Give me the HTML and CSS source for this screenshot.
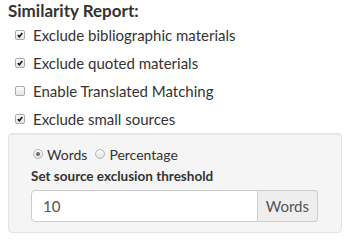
FILE: index.html
```html
<!DOCTYPE html>
<html lang="en">
<head>
    <meta charset="UTF-8">
    <title>Similarity Report</title>
    <link rel="stylesheet" href="styles.css">
</head>
<body>
    <div class="report">
        <div class="report-title">Similarity Report:</div>

        <label class="check-row">
            <span class="box checked"><svg viewBox="0 0 10 10"><path d="M2.2 5.2 L4.2 7.2 L7.9 2.6" /></svg></span>
            Exclude bibliographic materials
        </label>
        <label class="check-row">
            <span class="box checked"><svg viewBox="0 0 10 10"><path d="M2.2 5.2 L4.2 7.2 L7.9 2.6" /></svg></span>
            Exclude quoted materials
        </label>
        <label class="check-row">
            <span class="box"></span>
            Enable Translated Matching
        </label>
        <label class="check-row">
            <span class="box checked"><svg viewBox="0 0 10 10"><path d="M2.2 5.2 L4.2 7.2 L7.9 2.6" /></svg></span>
            Exclude small sources
        </label>

        <div class="well">
            <div class="radio-row">
                <label class="radio"><span class="dot on"></span>Words</label>
                <label class="radio"><span class="dot"></span>Percentage</label>
            </div>
            <div class="threshold-label">Set source exclusion threshold</div>
            <div class="input-group">
                <div class="input">10</div>
                <div class="addon">Words</div>
            </div>
        </div>
    </div>
</body>
</html>
```

FILE: styles.css
```css
body {
    margin: 0;
    background: #fff;
    color: #333;
    font-family: Lato, "Open Sans", sans-serif;
    font-size: 15px;
}

.report {
    padding: 0 8px;
}

.report-title {
    font-size: 17px;
    font-weight: 700;
    line-height: 20px;
    padding-top: 1px;
}

.check-row {
    display: flex;
    align-items: center;
    height: 28px;
    padding-left: 7px;
    gap: 8px;
}

.box {
    width: 8px;
    height: 8px;
    border: 1px solid #a9a9a9;
    border-radius: 2px;
    background: linear-gradient(#fdfdfd, #e4e4e4);
    display: flex;
}

.box svg {
    width: 8px;
    height: 8px;
}

.box path {
    fill: none;
    stroke: #1a1a1a;
    stroke-width: 2;
}

.well {
    background: #f5f5f5;
    border: 1px solid #e3e3e3;
    border-radius: 4px;
    box-shadow: inset 0 1px 1px rgba(0, 0, 0, 0.05);
    padding: 10px 23px 10px 22px;
}

.radio-row {
    display: flex;
    align-items: center;
    height: 20px;
    padding-left: 2px;
    font-size: 14px;
}

.radio {
    display: flex;
    align-items: center;
    gap: 4px;
    margin-right: 8px;
}

.dot {
    width: 8px;
    height: 8px;
    border: 1px solid #b5b5b5;
    border-radius: 50%;
    background: linear-gradient(#fdfdfd, #e2e2e2);
    position: relative;
}

.dot.on::after {
    content: "";
    position: absolute;
    left: 2px;
    top: 2px;
    width: 4px;
    height: 4px;
    border-radius: 50%;
    background: #6a6a6a;
}

.threshold-label {
    font-size: 13.5px;
    font-weight: 700;
    line-height: 20px;
    margin-top: 2px;
}

.input-group {
    display: flex;
    margin-top: 4px;
    height: 32px;
}

.input {
    flex: 1;
    background: #fff;
    border: 1px solid #ccc;
    border-radius: 4px 0 0 4px;
    padding-left: 11px;
    display: flex;
    align-items: center;
    color: #555;
}

.addon {
    background: #eee;
    border: 1px solid #ccc;
    border-left: none;
    border-radius: 0 4px 4px 0;
    padding: 0 8px;
    display: flex;
    align-items: center;
    color: #555;
}
```
